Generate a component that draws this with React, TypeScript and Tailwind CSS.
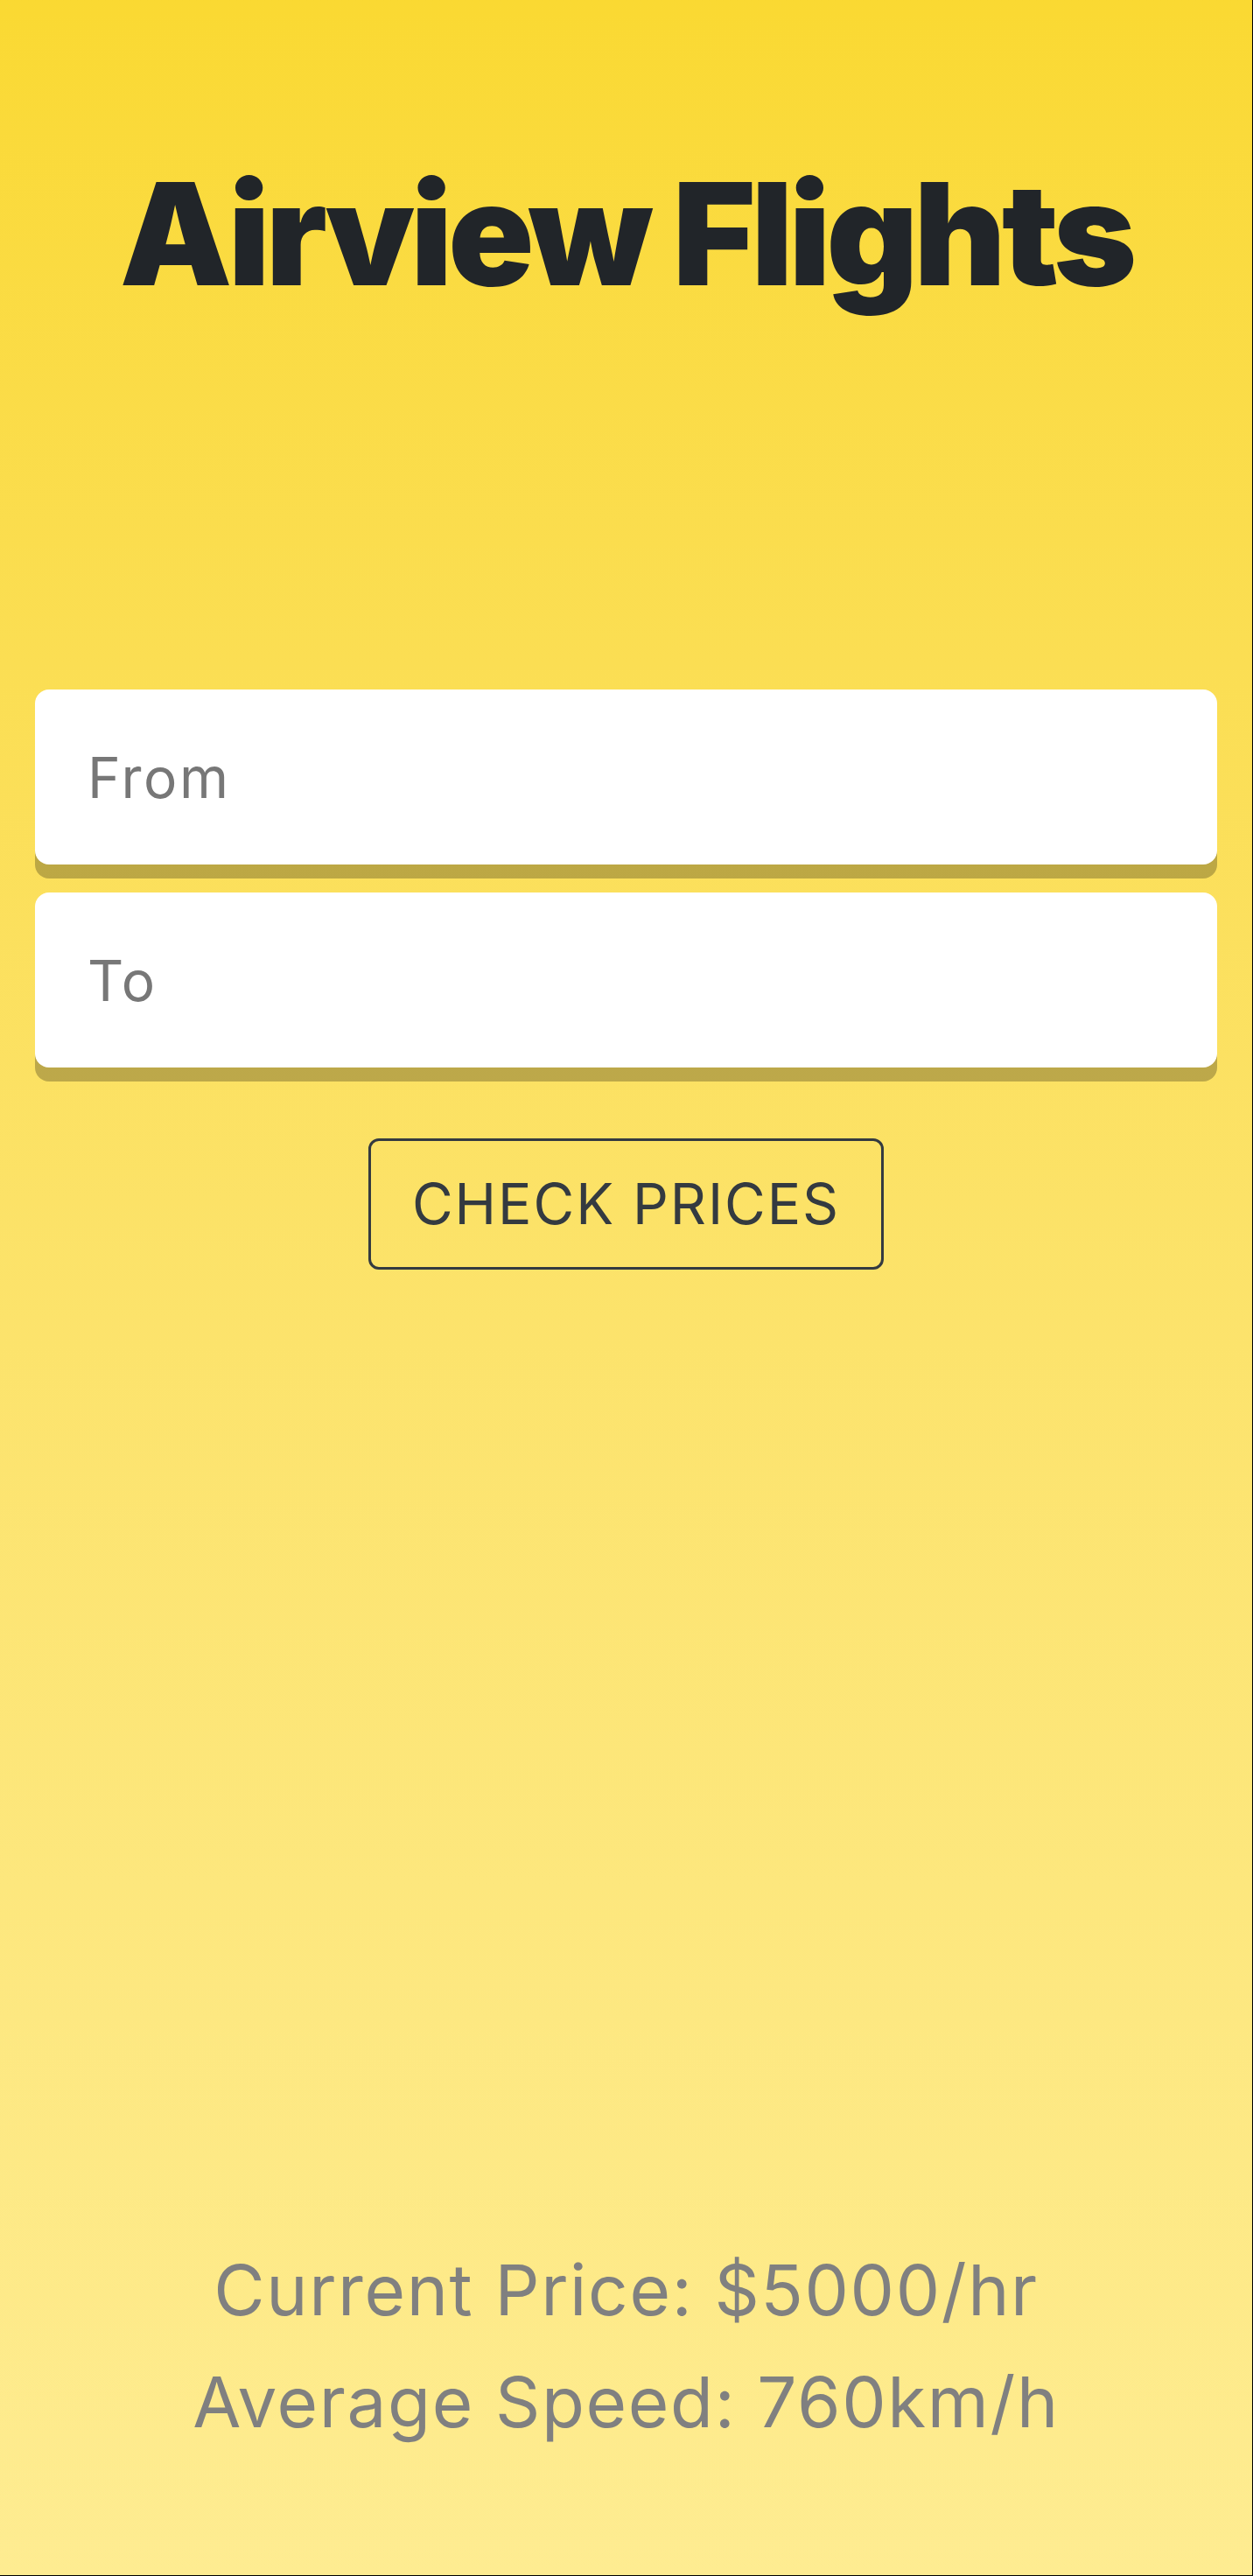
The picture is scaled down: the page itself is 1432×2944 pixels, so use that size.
import React from 'react';

const font = { fontFamily: 'Inter, "Noto Sans", sans-serif' };

const App: React.FC = () => {
  return (
    <div
      style={font}
      className="h-[2944px] flex flex-col items-center bg-gradient-to-b from-[#fad932] to-[#feec91] border-r border-b border-black"
    >
      <h1 className="mt-[186px] text-[162px] leading-none font-black tracking-[-0.03em] text-[#212529]">
        Airview Flights
      </h1>

      <form className="mt-[440px] w-full px-10 flex flex-col gap-8" onSubmit={(e) => e.preventDefault()}>
        <input
          placeholder="From"
          className="h-[200px] w-full bg-white rounded-2xl px-[60px] text-[64px] tracking-[0.04em] text-[#212529] placeholder:text-[#777777] shadow-[0_16px_0_rgba(0,0,0,0.25)] outline-none"
        />
        <input
          placeholder="To"
          className="h-[200px] w-full bg-white rounded-2xl px-[60px] text-[64px] tracking-[0.04em] text-[#212529] placeholder:text-[#777777] shadow-[0_16px_0_rgba(0,0,0,0.25)] outline-none"
        />
        <div className="flex justify-center mt-[49px]">
          <button
            type="submit"
            className="w-[589px] h-[150px] border-[3px] border-[#343a40] rounded-xl text-[64px] tracking-[0.03em] text-[#343a40] uppercase"
          >
            Check Prices
          </button>
        </div>
      </form>

      <div className="mt-auto mb-[134px] flex flex-col items-center text-[80px] leading-[128px] tracking-[0.02em] text-[#808080]">
        <p>Current Price: $5000/hr</p>
        <p>Average Speed: 760km/h</p>
      </div>
    </div>
  );
};

export default App;
